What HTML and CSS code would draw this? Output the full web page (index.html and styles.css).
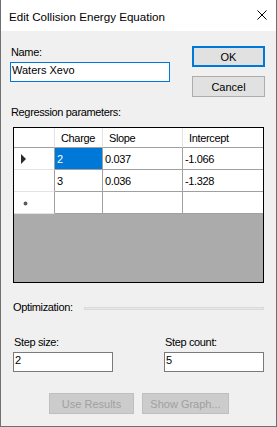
FILE: index.html
```html
<!DOCTYPE html>
<html>
<head>
<meta charset="utf-8">
<link rel="stylesheet" href="styles.css">
</head>
<body>
<div class="win">
  <div class="titlebar">
    <div class="title">Edit Collision Energy Equation</div>
    <svg class="close" width="10" height="10" viewBox="0 0 10 10"><path d="M0.5 0.5 L9.5 9.5 M9.5 0.5 L0.5 9.5" stroke="#000" stroke-width="1" fill="none"/></svg>
  </div>
  <div class="body">
    <div class="top">
      <div class="namecol">
        <div class="lbl">Name:</div>
        <div class="tb tb-focus">Waters Xevo</div>
      </div>
      <div class="btncol">
        <div class="btn btn-default">OK</div>
        <div class="btn btn-cancel">Cancel</div>
      </div>
    </div>
    <div class="lbl sec">Regression parameters:</div>
    <div class="grid">
      <div class="dgv">
        <div class="c h rh"></div>
        <div class="c h">Charge</div>
        <div class="c h">Slope</div>
        <div class="c h last">Intercept</div>

        <div class="c rh"><svg width="5" height="10" viewBox="0 0 5 10"><polygon points="0,0 5,5 0,10" fill="#2b2b2b"/></svg></div>
        <div class="c d sel">2</div>
        <div class="c d">0.037</div>
        <div class="c d last">-1.066</div>

        <div class="c rh"></div>
        <div class="c d">3</div>
        <div class="c d">0.036</div>
        <div class="c d last">-1.328</div>

        <div class="c rh"><svg class="star" width="5" height="5" viewBox="0 0 5 5"><circle cx="2.5" cy="2.5" r="1.9" fill="#5a5a5a"/></svg></div>
        <div class="c d"></div>
        <div class="c d"></div>
        <div class="c d last"></div>
      </div>
    </div>
    <div class="opt">
      <div class="lbl">Optimization:</div>
      <div class="groove"></div>
    </div>
    <div class="steps">
      <div class="stepcol">
        <div class="lbl">Step size:</div>
        <div class="tb">2</div>
      </div>
      <div class="stepcol">
        <div class="lbl">Step count:</div>
        <div class="tb">5</div>
      </div>
    </div>
    <div class="actions">
      <div class="btn btn-dis btn-use">Use Results</div>
      <div class="btn btn-dis btn-graph">Show Graph...</div>
    </div>
  </div>
</div>
</body>
</html>
```
FILE: styles.css
```css
html, body {
  margin: 0;
  padding: 0;
  background: #f0f0f0;
}
.win {
  box-sizing: border-box;
  width: 277px;
  height: 427px;
  border: 1px solid #707070;
  border-top: none;
  background: #f0f0f0;
  font-family: "Liberation Sans", Arial, sans-serif;
  font-size: 11px;
  letter-spacing: -0.35px;
  color: #000;
  overflow: hidden;
}
.titlebar {
  height: 31px;
  background: #fff;
  display: flex;
  justify-content: space-between;
  align-items: flex-start;
}
.title {
  font-size: 11.6px;
  letter-spacing: 0;
  line-height: 15px;
  padding-top: 9px;
  padding-left: 8px;
  color: #000;
}
.close {
  display: block;
  margin-top: 10px;
  margin-right: 9px;
}
.lbl {
  line-height: 13px;
  height: 13px;
  white-space: nowrap;
}
.top {
  display: flex;
  align-items: flex-start;
  margin-top: 15px;
  padding-left: 9px;
}
.namecol {
  width: 160px;
}
.namecol .lbl {
  padding-left: 1px;
}
.tb {
  box-sizing: border-box;
  height: 20px;
  margin-top: 3px;
  border: 1px solid #7a7a7a;
  background: #fff;
  line-height: 15px;
  padding-left: 1px;
  letter-spacing: 0;
  white-space: nowrap;
}
.tb-focus {
  border-color: #0078d7;
}
.btncol {
  margin-left: 22px;
  display: flex;
  flex-direction: column;
  gap: 9px;
}
.btn {
  box-sizing: border-box;
  height: 21px;
  width: 73px;
  background: #e1e1e1;
  border: 1px solid #adadad;
  display: flex;
  align-items: center;
  justify-content: center;
  letter-spacing: 0;
  white-space: nowrap;
}
.btn-default {
  border: 2px solid #0078d7;
}
.sec {
  margin-top: 9px;
  padding-left: 10px;
}
.grid {
  box-sizing: border-box;
  margin-top: 8px;
  margin-left: 12px;
  width: 251px;
  height: 156px;
  border: 1px solid #000;
  background: #ababab;
}
.dgv {
  display: grid;
  grid-template-columns: 41px 48px 80px 80px;
  grid-template-rows: 20px 22px 22px 22px;
  background: #fff;
}
.c {
  box-sizing: border-box;
  border-right: 1px solid #a0a0a0;
  border-bottom: 1px solid #a0a0a0;
  display: flex;
  align-items: center;
  white-space: nowrap;
  overflow: hidden;
}
.c.last {
  border-right: none;
}
.c.h {
  border-right-color: #e3e3e3;
  padding-left: 6px;
}
.c.h.rh {
  padding-left: 0;
}
.c.rh {
  border-bottom-color: #e3e3e3;
  padding-left: 6px;
}
.c.h.rh {
  border-bottom-color: #a0a0a0;
}
.c.d {
  padding-left: 2px;
}
.c.sel {
  background: #0078d7;
  color: #fff;
}
.rh svg {
  display: block;
  margin-left: 1px;
}
.rh .star {
  margin-left: 3px;
  margin-top: 1px;
}
.opt {
  display: flex;
  align-items: flex-start;
  margin-top: 18px;
  padding-left: 12px;
  padding-right: 12px;
}
.groove {
  flex: 1;
  box-sizing: border-box;
  height: 3px;
  margin-top: 6px;
  margin-left: 11px;
  border: 1px solid #d9d9d9;
  background: #e8e8e8;
}
.steps {
  display: flex;
  margin-top: 22px;
  padding-left: 12px;
  gap: 51px;
}
.stepcol {
  width: 100px;
}
.stepcol .lbl {
  padding-left: 1px;
}
.actions {
  display: flex;
  margin-top: 21px;
  padding-left: 48px;
  gap: 8px;
}
.btn-dis {
  background: #cccccc;
  border-color: #bfbfbf;
  color: #a0a0a0;
}
.btn-use {
  width: 85px;
}
.btn-graph {
  width: 87px;
}
```
